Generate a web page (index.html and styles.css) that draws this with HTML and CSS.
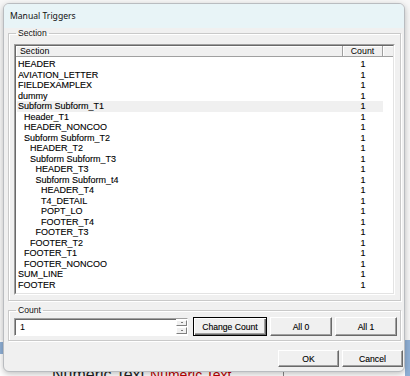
FILE: index.html
```html
<!DOCTYPE html>
<html lang="en">
	<head>
		<meta charset="utf-8">
		<title>Manual Triggers</title>
		<link rel="stylesheet" href="styles.css">
	</head>
	<body>
		<div class="page">
			<div class="page-bottom">
				<span class="page-edge page-edge-left"></span>
				<div class="page-strip">
					<span class="page-big">Numeric Text</span>
					<span class="page-red">Numeric Text</span>
					<span class="page-rule"></span>
				</div>
				<span class="page-edge page-edge-right"></span>
			</div>
		</div>

		<div class="dialog">
			<div class="titlebar">Manual Triggers</div>
			<div class="dialog-body">
				<fieldset class="group group-section">
					<legend>Section</legend>
					<div class="listbox">
						<div class="listbox-inner">
							<div class="list-head">
								<div class="head-cell head-name">Section</div>
								<div class="head-cell head-count">Count</div>
								<div class="head-cell head-rest"></div>
							</div>
							<div class="rows">
								<div class="row"><span class="name">HEADER</span><span class="count">1</span></div>
								<div class="row"><span class="name">AVIATION_LETTER</span><span class="count">1</span></div>
								<div class="row"><span class="name">FIELDEXAMPLEX</span><span class="count">1</span></div>
								<div class="row"><span class="name">dummy</span><span class="count">1</span></div>
								<div class="row selected"><span class="name">Subform Subform_T1</span><span class="count">1</span></div>
								<div class="row"><span class="name l1">Header_T1</span><span class="count">1</span></div>
								<div class="row"><span class="name l1">HEADER_NONCOO</span><span class="count">1</span></div>
								<div class="row"><span class="name l1">Subform Subform_T2</span><span class="count">1</span></div>
								<div class="row"><span class="name l2">HEADER_T2</span><span class="count">1</span></div>
								<div class="row"><span class="name l2">Subform Subform_T3</span><span class="count">1</span></div>
								<div class="row"><span class="name l3">HEADER_T3</span><span class="count">1</span></div>
								<div class="row"><span class="name l3">Subform Subform_t4</span><span class="count">1</span></div>
								<div class="row"><span class="name l4">HEADER_T4</span><span class="count">1</span></div>
								<div class="row"><span class="name l4">T4_DETAIL</span><span class="count">1</span></div>
								<div class="row"><span class="name l4">POPT_LO</span><span class="count">1</span></div>
								<div class="row"><span class="name l4">FOOTER_T4</span><span class="count">1</span></div>
								<div class="row"><span class="name l3">FOOTER_T3</span><span class="count">1</span></div>
								<div class="row"><span class="name l2">FOOTER_T2</span><span class="count">1</span></div>
								<div class="row"><span class="name l1">FOOTER_T1</span><span class="count">1</span></div>
								<div class="row"><span class="name l1">FOOTER_NONCOO</span><span class="count">1</span></div>
								<div class="row"><span class="name">SUM_LINE</span><span class="count">1</span></div>
								<div class="row"><span class="name">FOOTER</span><span class="count">1</span></div>
							</div>
						</div>
					</div>
				</fieldset>

				<fieldset class="group group-count">
					<legend>Count</legend>
					<div class="count-row">
						<div class="spin-field">
							<div class="spin-input">1</div>
							<div class="spin-buttons">
								<div class="spin-btn"><span class="arrow-up"></span></div>
								<div class="spin-btn"><span class="arrow-down"></span></div>
							</div>
						</div>
						<button class="btn btn-default btn-change">Change Count</button>
						<button class="btn btn-all">All 0</button>
						<button class="btn btn-all">All 1</button>
					</div>
				</fieldset>

				<div class="footer">
					<button class="btn btn-ok">OK</button>
					<button class="btn btn-cancel">Cancel</button>
				</div>
			</div>
		</div>
	</body>
</html>
```

FILE: styles.css
```css
body{
	margin: 0;
	padding: 0;
	width: 410px;
	height: 376px;
	overflow: hidden;
	position: relative;
	background: #f6f6f6;
	font-family: "Liberation Sans", Arial, sans-serif;
	color: #000;
}

/* page behind the dialog */
.page{
	height: 376px;
	display: flex;
	flex-direction: column;
	justify-content: flex-end;
	background: #f7f7f7;
}

.page-bottom{
	height: 36px;
	display: flex;
	align-items: flex-end;
	background: #fff;
}

.page-edge{
	align-self: stretch;
	width: 4px;
	background: #8fb0d6;
}

.page-edge-left{
	align-self: flex-start;
	height: 12px;
	margin-top: 2px;
}

.page-edge-right{
	margin-left: auto;
	width: 5px;
}

.page-strip{
	height: 12px;
	overflow: hidden;
	display: flex;
	align-items: flex-start;
	padding-left: 48px;
}

.page-big{
	font-size: 16px;
	line-height: 14px;
	color: #222;
	padding-top: 4px;
}

.page-red{
	font-size: 14px;
	line-height: 12px;
	color: #c00000;
	margin-left: 5px;
	padding-top: 5px;
}

.page-rule{
	width: 1px;
	height: 12px;
	background: #888;
	margin-left: 51px;
}

/* dialog */
.dialog{
	position: absolute;
	left: 3px;
	top: 3px;
	width: 400px;
	height: 367px;
	border: 1px solid #b9bcc0;
	border-radius: 6px;
	background: #f0f0f0;
	box-shadow: 0 2px 6px rgba(0, 0, 0, 0.25);
	overflow: hidden;
	display: flex;
	flex-direction: column;
}

.titlebar{
	height: 24px;
	line-height: 24px;
	padding-left: 6px;
	background: #e8f4f7;
	font-family: "Noto Sans", "Open Sans", sans-serif;
	font-size: 8.6px;
	color: #111;
}

.dialog-body{
	flex: 1;
	padding: 0 3px 0 4px;
	font-size: 8.6px;
}

.group{
	margin: 0;
	border: 1px solid #c9c9c9;
	box-shadow: inset 1px 1px 0 #fff, 1px 1px 0 #fff;
}

.group legend{
	padding: 0 2px;
	margin-left: 2px;
	line-height: 11px;
	color: #111;
}

.group-section{
	padding: 5px 5px 5px 5px;
}

.group-count{
	margin-top: 4px;
	padding: 1px 3px 4px 5px;
}

/* list */
.listbox{
	height: 251px;
	box-sizing: border-box;
	border: 1px solid;
	border-color: #a0a0a0 #fff #fff #a0a0a0;
}

.listbox-inner{
	height: 100%;
	box-sizing: border-box;
	border: 1px solid;
	border-color: #696969 #e3e3e3 #e3e3e3 #696969;
	background: #fff;
	font-size: 9px;
}

.list-head{
	display: flex;
	height: 11px;
	background: #f0f0f0;
}

.head-cell{
	box-sizing: border-box;
	line-height: 10px;
	font-size: 8.8px;
	border-right: 1px solid #a0a0a0;
	border-bottom: 1px solid #a0a0a0;
	box-shadow: inset 1px 1px 0 #fff;
}

.head-name{
	flex: 1;
	padding-left: 4px;
}

.head-count{
	width: 40px;
	text-align: center;
}

.head-rest{
	width: 10px;
	border-right: none;
}

.rows{
	padding-top: 2px;
	margin-right: 10px;
	-webkit-text-stroke: 0.12px #000;
}

.row{
	display: flex;
	height: 10.5px;
	line-height: 10.5px;
	white-space: nowrap;
}

.row.selected{
	background: #f0f0f0;
	margin-left: 1px;
}

.row.selected .name{
	padding-left: 1px;
}

.name{
	flex: 1;
	padding-left: 2px;
}

.l1{ padding-left: 8px; }
.l2{ padding-left: 14px; }
.l3{ padding-left: 19.5px; }
.l4{ padding-left: 25px; }

.count{
	width: 40px;
	text-align: center;
}

/* count group */
.count-row{
	display: flex;
	align-items: center;
	height: 19px;
}

.spin-field{
	display: flex;
	width: 174px;
	height: 18px;
	box-sizing: border-box;
	border: 1px solid;
	border-color: #a0a0a0 #fff #fff #a0a0a0;
	background: #fff;
}

.spin-input{
	flex: 1;
	border-top: 1px solid #696969;
	border-left: 1px solid #696969;
	padding-left: 4px;
	line-height: 15px;
	font-size: 9px;
}

.spin-buttons{
	width: 11px;
	display: flex;
	flex-direction: column;
	padding: 1px 0;
	gap: 1px;
	background: #fff;
}

.spin-btn{
	flex: 1;
	background: #f0f0f0;
	border: 1px solid;
	border-color: #fff #808080 #808080 #fff;
	display: flex;
	align-items: center;
	justify-content: center;
}

.arrow-up, .arrow-down{
	width: 0;
	height: 0;
	border-left: 1px solid transparent;
	border-right: 1px solid transparent;
}

.arrow-up{ border-bottom: 1px solid #000; }
.arrow-down{ border-top: 1px solid #000; }

.btn{
	font-family: inherit;
	font-size: 8.6px;
	color: #000;
	-webkit-text-stroke: 0.12px #000;
	height: 19px;
	padding: 0;
	background: #f0f0f0;
	border: 1px solid;
	border-color: #fff #696969 #696969 #fff;
	box-shadow: inset -1px -1px 0 #a0a0a0;
}

.btn-default{
	border: 1px solid #000;
	box-shadow: inset 1px 1px 0 #fff, inset -1px -1px 0 #696969, inset -2px -2px 0 #a0a0a0;
}

.btn-change{
	width: 74px;
	margin-left: 5px;
}

.btn-all{
	width: 62px;
	margin-left: 3px;
}

.footer{
	display: flex;
	justify-content: flex-end;
	gap: 3px;
	padding-top: 9px;
	margin-right: -2px;
}

.btn-ok, .btn-cancel{
	width: 61px;
	height: 17px;
}
```
